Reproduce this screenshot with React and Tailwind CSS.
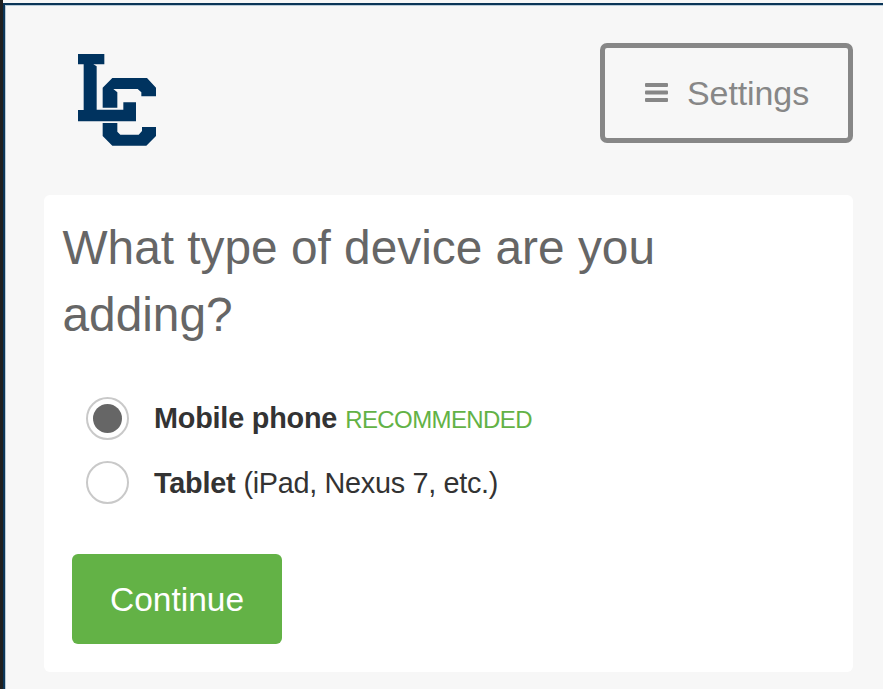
import { useState } from 'react'

const DEVICES = [
    { id: 'phone', name: 'Mobile phone', tag: 'RECOMMENDED' },
    { id: 'tablet', name: 'Tablet', note: '(iPad, Nexus 7, etc.)' },
]

function Logo() {
    return (
        <svg className="w-[78px] h-[92px]" viewBox="36 31 234 276" fill="#00335f" aria-label="LC">
            <path d="M36 31H115V62H82L92 68V198H172V176H210V233H36V199H53V62H36Z" />
            <path d="M110 192V132L139 103H243L270 132V158H226V146L215 136H142L154 146V192Z" />
            <path d="M110 238H154V264L163 273H218L228 262V250H270V277L241 306H139L110 277Z" />
        </svg>
    )
}

function MenuIcon() {
    return (
        <svg className="w-[23px] h-[20px]" viewBox="0 0 23 20" fill="#878787">
            <rect x="0" y="0" width="23" height="4" rx="1" />
            <rect x="0" y="7.5" width="23" height="4" rx="1" />
            <rect x="0" y="15" width="23" height="4" rx="1" />
        </svg>
    )
}

function DeviceOption({ device, checked, onSelect }) {
    return (
        <label className="flex h-[64px] items-center cursor-pointer">
            <input type="radio" name="device" className="sr-only" checked={checked} onChange={onSelect} />
            <span className="flex size-[43px] shrink-0 items-center justify-center rounded-full border-2 border-[#c9c9c9] bg-white">
                {checked && <span className="size-[29px] rounded-full bg-[#666666]" />}
            </span>
            <span className="ml-[25px] pt-[2px] whitespace-nowrap text-[28.8px] leading-[62px] text-[#333333]">
                <b className="tracking-[-0.2px]">{device.name}</b>{' '}
                {device.tag && <span className="text-[24px] tracking-[-0.6px] text-[#63b246]">{device.tag}</span>}
                {device.note && <span className="tracking-[-0.3px]">{device.note}</span>}
            </span>
        </label>
    )
}

export default function App() {
    const [selected, setSelected] = useState('phone')

    return (
        <div className="h-[689px] w-[883px] overflow-hidden bg-[#f7f7f7] border-l-3 border-[#202020] pt-[3px] font-['Liberation_Sans',Arial,sans-serif]">
            <div className="h-full border-t-2 border-l-2 border-[#0b3557]">
                <div className="h-full border-t border-l border-[#b9cbd8] pl-[37.5px] pr-[30px]">
                    <header className="flex h-[137px] justify-between pt-[37px]">
                        <div className="pl-[34.5px] pt-[11px]">
                            <Logo />
                        </div>
                        <button className="flex h-[100px] w-[253px] items-center rounded-[7px] border-5 border-[#878787] pl-[40px] text-[34px] text-[#878787]">
                            <MenuIcon />
                            <span className="ml-[19px] tracking-[-0.1px]">Settings</span>
                        </button>
                    </header>

                    <main className="mt-[52px] h-[477px] rounded-[6px] bg-white pl-[19px] pt-[20px]">
                        <h1 className="w-[640px] text-[47.8px] leading-[66.5px] text-[#666666]">
                            What type of device are you adding?
                        </h1>
                        <div className="mt-[38px] pl-[23.5px]">
                            {DEVICES.map(d => (
                                <DeviceOption
                                    key={d.id}
                                    device={d}
                                    checked={selected === d.id}
                                    onSelect={() => setSelected(d.id)}
                                />
                            ))}
                        </div>
                        <button className="ml-[9.5px] mt-[40px] h-[90px] w-[210px] rounded-[6px] bg-[#63b246] pt-[2px] text-[33.5px] text-white">
                            Continue
                        </button>
                    </main>
                </div>
            </div>
        </div>
    )
}
